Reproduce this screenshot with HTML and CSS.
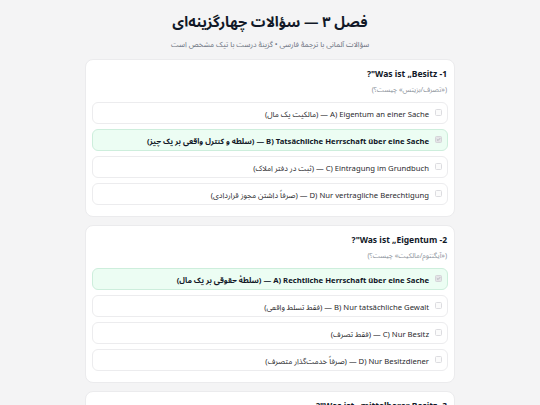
FILE: index.html
```html
<!DOCTYPE html>
<html lang="fa" dir="rtl">
<head>
<meta charset="utf-8">
<title>فصل ۳ — سؤالات چهارگزینه‌ای</title>
<link rel="stylesheet" href="styles.css">
</head>
<body>
<main class="page">
  <header class="head">
    <h1 class="head-title">فصل ۳ — سؤالات چهارگزینه‌ای</h1>
    <p class="head-sub">سؤالات آلمانی با ترجمهٔ فارسی • گزینهٔ درست با تیک مشخص است</p>
  </header>

  <section class="card">
    <h2 class="q-title">1- Was ist „Besitz"?</h2>
    <p class="q-sub">(«تصرف/بزیتس» چیست؟)</p>
    <ul class="opts">
      <li class="opt"><span class="box"></span><span class="opt-text">A) Eigentum an einer Sache — (مالکیت یک مال)</span></li>
      <li class="opt is-correct"><span class="box is-checked"><svg viewBox="0 0 10 10"><path d="M2.3 5.2 L4.2 7 L7.8 3" /></svg></span><span class="opt-text">B) Tatsächliche Herrschaft über eine Sache — (سلطه و کنترل واقعی بر یک چیز)</span></li>
      <li class="opt"><span class="box"></span><span class="opt-text">C) Eintragung im Grundbuch — (ثبت در دفتر املاک)</span></li>
      <li class="opt"><span class="box"></span><span class="opt-text">D) Nur vertragliche Berechtigung — (صرفاً داشتن مجوز قراردادی)</span></li>
    </ul>
  </section>

  <section class="card">
    <h2 class="q-title">2- Was ist „Eigentum"?</h2>
    <p class="q-sub">(«آیگنتوم/مالکیت» چیست؟)</p>
    <ul class="opts">
      <li class="opt is-correct"><span class="box is-checked"><svg viewBox="0 0 10 10"><path d="M2.3 5.2 L4.2 7 L7.8 3" /></svg></span><span class="opt-text">A) Rechtliche Herrschaft über eine Sache — (سلطهٔ حقوقی بر یک مال)</span></li>
      <li class="opt"><span class="box"></span><span class="opt-text">B) Nur tatsächliche Gewalt — (فقط تسلط واقعی)</span></li>
      <li class="opt"><span class="box"></span><span class="opt-text">C) Nur Besitz — (فقط تصرف)</span></li>
      <li class="opt"><span class="box"></span><span class="opt-text">D) Nur Besitzdiener — (صرفاً خدمت‌گذار متصرف)</span></li>
    </ul>
  </section>

  <section class="card">
    <h2 class="q-title">3- Was ist „mittelbarer Besitz"?</h2>
    <p class="q-sub">(«تصرف غیرمستقیم» چیست؟)</p>
    <ul class="opts">
      <li class="opt"><span class="box"></span><span class="opt-text">A) Besitz durch einen Besitzmittler — (تصرف از طریق واسطه)</span></li>
    </ul>
  </section>
</main>
</body>
</html>
```

FILE: styles.css
```css
* { box-sizing: border-box; }

html, body {
  margin: 0;
  padding: 0;
  background: #f4f4f5;
}

body {
  font-family: "Noto Sans", "Noto Sans Arabic", "DejaVu Sans", sans-serif;
  color: #1f2937;
}

.page {
  width: 370px;
  margin: 0 auto;
  padding-top: 10px;
  display: flex;
  flex-direction: column;
  gap: 8px;
}

.head {
  text-align: center;
  margin-bottom: 1px;
}

.head-title {
  margin: 0;
  font-size: 14.5px;
  line-height: 22px;
  font-weight: 700;
  color: #111827;
}

.head-sub {
  margin: 7px 0 0;
  font-size: 7.5px;
  line-height: 11px;
  color: #6b7280;
}

.card {
  background: #ffffff;
  border: 1px solid #ebebed;
  border-radius: 8px;
  padding: 7px 6px 10px;
  height: 158px;
}

.q-title {
  margin: 0;
  font-size: 8.5px;
  line-height: 13px;
  font-weight: 700;
  color: #111827;
  padding-right: 1px;
}

.q-sub {
  margin: 4px 0 0;
  font-size: 7px;
  line-height: 11px;
  color: #8b919a;
  padding-right: 1px;
}

.opts {
  list-style: none;
  margin: 7px 0 0;
  padding: 0;
  display: flex;
  flex-direction: column;
  gap: 5px;
}

.opt {
  height: 22px;
  display: flex;
  align-items: flex-start;
  gap: 6px;
  padding: 5px 5px 0 7px;
  border: 1px solid #ececee;
  border-radius: 6px;
  background: #ffffff;
  font-size: 7.7px;
  line-height: 12px;
  color: #2a2a2e;
}

.opt.is-correct {
  background: #ecfdf3;
  border-color: #cdeedc;
  font-weight: 700;
  color: #111827;
}

.box {
  flex: none;
  width: 7px;
  height: 7px;
  margin-top: 1px;
  border: 1px solid #dcdce0;
  border-radius: 1.5px;
  background: #fbfbfb;
  display: flex;
  align-items: center;
  justify-content: center;
}

.box.is-checked {
  background: #e4e4e7;
  border-color: #d4d4d8;
}

.box svg {
  width: 7px;
  height: 7px;
  fill: none;
  stroke: #a1a1aa;
  stroke-width: 1.4;
  stroke-linecap: round;
  stroke-linejoin: round;
}

.opt-text {
  white-space: nowrap;
}
```
